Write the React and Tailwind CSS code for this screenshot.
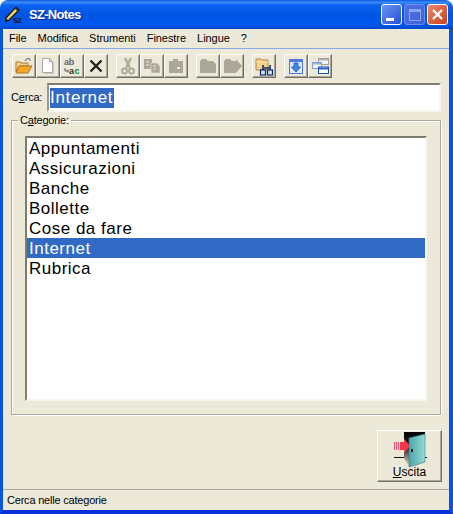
const menus = ['File', 'Modifica', 'Strumenti', 'Finestre', 'Lingue', '?'];
const categories = ['Appuntamenti', 'Assicurazioni', 'Banche', 'Bollette', 'Cose da fare', 'Internet', 'Rubrica'];

const GRAY = '#aca899';

function AppIcon() {
  return (
    <svg width="19" height="17" viewBox="0 0 19 17">
      <path d="M1 12 L11 1 L14 4 L4 14 L0.5 15.5 Z" fill="#f3d36b" stroke="#111" strokeWidth="1.2" />
      <path d="M10.5 2 L13.5 5" stroke="#333" strokeWidth="2" />
      <path d="M1 12.5 L0.5 15.5 L3.5 14.5 Z" fill="#111" />
      <text x="8" y="16.5" fontSize="7" fontWeight="700" fill="#111" fontFamily="'Liberation Sans', sans-serif">SZ</text>
    </svg>
  );
}

function OpenIcon() {
  return (
    <svg width="18" height="16" viewBox="0 0 18 16">
      <path d="M10 3 C11 1 13 0 15 1 M15 1 L13 0 M15 1 L15 3" stroke="#8a8a8a" strokeWidth="1.2" fill="none" />
      <path d="M1 4 H5 L6 5 H13 V8 H4 L1 14 Z" fill="#f7d28b" stroke="#a8772c" />
      <path d="M4 8 H17 L13 15 H1 Z" fill="#f5a623" stroke="#a8772c" />
    </svg>
  );
}

function NewIcon() {
  return (
    <svg width="12" height="16" viewBox="0 0 12 16">
      <path d="M.5 .5 H7.5 L10.5 3.5 V14.5 H.5 Z" fill="#fff" stroke="#a8a8a8" />
      <path d="M7.5 .5 V3.5 H10.5 Z" fill="#ddd" stroke="#a8a8a8" />
      <path d="M11.5 4 V15.5 H2" stroke="#c8c8c8" fill="none" />
    </svg>
  );
}

function ReplaceIcon() {
  return (
    <svg width="20" height="18" viewBox="0 0 20 18" fontFamily="'Liberation Sans', sans-serif" fontWeight="700">
      <text x="2" y="8" fontSize="9" fill="#666">ab</text>
      <path d="M3 11 V14 H6 M6 12.5 V15.5" stroke="#555" fill="none" />
      <text x="7" y="17" fontSize="9" fill="#333">a</text>
      <text x="12.5" y="17" fontSize="9" fill="#0a8a2a">c</text>
    </svg>
  );
}

function DeleteIcon() {
  return (
    <svg width="14" height="14" viewBox="0 0 14 14">
      <path d="M1.5 1.5 L12.5 12.5 M12.5 1.5 L1.5 12.5" stroke="#222" strokeWidth="2.4" />
    </svg>
  );
}

function CutIcon() {
  return (
    <svg width="14" height="18" viewBox="0 0 14 18">
      <path d="M4 1 L9 11 M10 1 L5 11" stroke={GRAY} strokeWidth="2.2" />
      <circle cx="3.5" cy="14" r="2.5" fill="none" stroke={GRAY} strokeWidth="1.8" />
      <circle cx="10.5" cy="14" r="2.5" fill="none" stroke={GRAY} strokeWidth="1.8" />
    </svg>
  );
}

function CopyIcon() {
  return (
    <svg width="18" height="16" viewBox="0 0 18 16">
      <path d="M1 1 H9 V11 H1 Z" fill={GRAY} />
      <path d="M8 5 H14 L17 8 V15 H8 Z" fill={GRAY} stroke="#ece9d8" strokeWidth=".6" />
      <path d="M3 4h3M3 7h3M10 8h3M10 11h3" stroke="#ece9d8" />
    </svg>
  );
}

function PasteIcon() {
  return (
    <svg width="17" height="16" viewBox="0 0 17 16">
      <path d="M1 3 H5 V1 H10 V3 H15 V15 H1 Z" fill={GRAY} />
      <path d="M9 9 H12 V11 H9 Z" fill="#ece9d8" />
    </svg>
  );
}

function FolderIcon() {
  return (
    <svg width="18" height="15" viewBox="0 0 18 15">
      <path d="M1 2 L3 0 H7 L9 2 H14 L17 5 V14 H1 Z" fill={GRAY} />
    </svg>
  );
}

function FolderArrowIcon() {
  return (
    <svg width="19" height="15" viewBox="0 0 19 15">
      <path d="M1 2 L3 0 H7 L9 2 H13 V0 L19 7 L13 14 H1 Z" fill={GRAY} />
    </svg>
  );
}

function FindIcon() {
  return (
    <svg width="19" height="19" viewBox="0 0 19 19">
      <path d="M1 2 H6 L7 3 H13 V13 H1 Z" fill="#f9cf86" stroke="#b08a4a" />
      <path d="M1 5 H13" stroke="#fbe4b8" />
      <rect x="5.5" y="13" width="5" height="5" fill="#cfe0f7" stroke="#0a2a6b" strokeWidth="1.2" />
      <rect x="12.5" y="13" width="5" height="5" fill="#cfe0f7" stroke="#0a2a6b" strokeWidth="1.2" />
      <path d="M8 8 V13 M15 8 V13 M9 11 H14" stroke="#0a2a6b" strokeWidth="1.6" />
    </svg>
  );
}

function DownloadIcon() {
  return (
    <svg width="14" height="15" viewBox="0 0 14 15">
      <rect x=".5" y=".5" width="13" height="14" fill="#dbe6f8" stroke="#5078d8" />
      <rect x="1" y="1" width="12" height="2" fill="#4a76e4" />
      <path d="M5 4 H9 V8 H11.5 L7 13 L2.5 8 H5 Z" fill="#3d8fe0" stroke="#1e3f9e" strokeWidth=".7" />
    </svg>
  );
}

function CascadeIcon() {
  return (
    <svg width="17" height="16" viewBox="0 0 17 16">
      <rect x="6.5" y=".5" width="10" height="6" fill="#f4f4f0" stroke="#a0a0a0" />
      <rect x="7" y="1" width="9" height="1.5" fill="#b0b0b0" />
      <rect x=".5" y="4.5" width="9" height="6" fill="#f4f4f0" stroke="#8aa0c8" />
      <rect x="1" y="5" width="8" height="1.5" fill="#8fb0e8" />
      <rect x="6.5" y="9" width="10" height="6.5" fill="#fff" stroke="#1f4fb8" />
      <rect x="7" y="9.5" width="9" height="2" fill="#2a62d8" />
    </svg>
  );
}

function ExitIcon() {
  return (
    <svg width="34" height="37" viewBox="0 0 34 37">
      <defs>
        <linearGradient id="frame" x1="0" y1="0" x2="0" y2="1">
          <stop offset="0" stopColor="#000" />
          <stop offset=".6" stopColor="#222" />
          <stop offset="1" stopColor="#8a8a8a" />
        </linearGradient>
        <linearGradient id="door" x1="0" y1="0" x2="1" y2="0">
          <stop offset="0" stopColor="#4aa6aa" />
          <stop offset="1" stopColor="#9ad8d8" />
        </linearGradient>
        <linearGradient id="floor" x1="0" y1="0" x2="0" y2="1">
          <stop offset="0" stopColor="#8a8880" />
          <stop offset="1" stopColor="#ece9d8" />
        </linearGradient>
      </defs>
      <path d="M11 27 H32 L24 36 H16 Z" fill="url(#floor)" />
      <rect x="11" y="1" width="21" height="26" fill="url(#frame)" />
      <path d="M1 26.5 H11 M30 26.5 H34" stroke="#111" />
      <path d="M16 7 L32 3 V31 L16 36 Z" fill="url(#door)" stroke="#2f7f86" strokeWidth=".6" />
      <rect x="18" y="18" width="2" height="3" fill="#111" />
      <path d="M1.5 11 V19 M3.5 11 V19 M5.5 11 V19" stroke="#f0506a" />
      <path d="M7 11 H11 V7.5 L17 15 L11 22.5 V19 H7 Z" fill="#f4364c" />
    </svg>
  );
}

function ToolButton({ children }) {
  return (
    <button className="flex h-[24px] w-[24px] items-center justify-center border border-t-white border-l-white border-r-[#716f64] border-b-[#716f64] shadow-[inset_-1px_-1px_0_#aca899]">
      {children}
    </button>
  );
}

function CaptionButton({ children, className }) {
  return (
    <div className={`flex h-[21px] w-[21px] justify-center rounded-[3px] border ${className}`}>
      {children}
    </div>
  );
}

export default function App() {
  return (
    <div className="flex h-[514px] w-[453px] flex-col overflow-hidden bg-white font-['Liberation_Sans',sans-serif] text-[11px] tracking-[-0.2px] text-black">
      <header className="flex h-[29px] shrink-0 items-center rounded-t-[8px] bg-[linear-gradient(180deg,#0a5ae0_0%,#3c8cf8_8%,#0a62f0_18%,#0054e3_50%,#0058ee_85%,#0048c8_100%)] pl-[5px] pr-[5px]">
        <AppIcon />
        <span className="ml-[5px] text-[13px] font-bold tracking-[-0.7px] text-white [text-shadow:1px_1px_0_#0a2a8a]">SZ-Notes</span>
        <div className="ml-auto flex gap-[2px]">
          <CaptionButton className="items-end border-white bg-[linear-gradient(135deg,#6d92f0,#2450d8)] pb-[3px] pr-[4px]">
            <span className="block h-[3px] w-[8px] bg-white" />
          </CaptionButton>
          <CaptionButton className="items-center border-[#6d8cec] bg-[linear-gradient(135deg,#4f72e2,#3a62d8)]">
            <span className="block h-[12px] w-[12px] border border-t-[3px] border-[#8ba4ee]" />
          </CaptionButton>
          <CaptionButton className="items-center border-white bg-[linear-gradient(135deg,#ec8a6a,#c8401c)]">
            <svg width="13" height="13" viewBox="0 0 13 13">
              <path d="M2 2 L11 11 M11 2 L2 11" stroke="#fff" strokeWidth="2.4" />
            </svg>
          </CaptionButton>
        </div>
      </header>

      <div className="flex min-h-0 flex-1 flex-col border-b-[4px] border-l-[3px] border-r-[4px] border-b-[#0831d9] border-l-[#0855dd] border-r-[#0855dd] bg-[#ece9d8]">
        <nav className="flex h-[20px] shrink-0 items-center gap-[11px] border-b border-b-[#8aa5e8] pl-[6px] leading-none tracking-[-0.05px]">
          {menus.map((m) => (
            <span key={m}>{m}</span>
          ))}
        </nav>

        <div className="mt-[5px] flex h-[24px] shrink-0 pl-[9px]">
          <ToolButton><OpenIcon /></ToolButton>
          <ToolButton><NewIcon /></ToolButton>
          <ToolButton><ReplaceIcon /></ToolButton>
          <ToolButton><DeleteIcon /></ToolButton>
          <div className="w-[8px]" />
          <ToolButton><CutIcon /></ToolButton>
          <ToolButton><CopyIcon /></ToolButton>
          <ToolButton><PasteIcon /></ToolButton>
          <div className="w-[8px]" />
          <ToolButton><FolderIcon /></ToolButton>
          <ToolButton><FolderArrowIcon /></ToolButton>
          <div className="w-[8px]" />
          <ToolButton><FindIcon /></ToolButton>
          <div className="w-[8px]" />
          <ToolButton><DownloadIcon /></ToolButton>
          <ToolButton><CascadeIcon /></ToolButton>
        </div>

        <div className="mt-[5px] flex shrink-0 items-center pl-[8px] pr-[8px]">
          <label className="w-[36px]">C<span className="underline">e</span>rca:</label>
          <div className="flex h-[29px] flex-1 items-center border-2 border-t-[#7f7c6d] border-l-[#9c9988] border-r-[#f6f5ee] border-b-[#f6f5ee] bg-white pl-[1px]">
            <span className="bg-[#316ac5] pr-[1px] text-[17px] leading-[20px] tracking-[0.7px] text-white">Internet</span>
          </div>
        </div>

        <fieldset className="mx-[8px] h-[303px] shrink-0 border border-[#aca899] px-[13px] shadow-[inset_1px_1px_0_#fff,1px_1px_0_#fff]">
          <legend className="-ml-[7px] px-[2px]">C<span className="underline">a</span>tegorie:</legend>
          <ul className="mt-[7px] h-[265px] border-2 border-t-[#7f7c6d] border-l-[#7f7c6d] border-r-[#f6f5ee] border-b-[#f6f5ee] bg-white text-[17px] leading-[22px] tracking-[0.5px]">
            {categories.map((c) => (
              <li key={c} className={`h-[20px] pl-[2px] ${c === 'Internet' ? 'bg-[#316ac5] text-white' : ''}`}>
                {c}
              </li>
            ))}
          </ul>
        </fieldset>

        <div className="mt-[15px] flex shrink-0 justify-end pr-[7px]">
          <button className="flex h-[52px] w-[65px] flex-col items-center border border-t-white border-l-white border-r-[#716f64] border-b-[#716f64] text-[12px] leading-[14px] tracking-normal shadow-[inset_-1px_-1px_0_#aca899]">
            <ExitIcon />
            <span className="-mt-[3px]"><span className="underline">U</span>scita</span>
          </button>
        </div>

        <footer className="mt-auto flex h-[21px] shrink-0 items-center border-t border-t-[#aca899] pl-[4px]">
          Cerca nelle categorie
        </footer>
      </div>
    </div>
  );
}
